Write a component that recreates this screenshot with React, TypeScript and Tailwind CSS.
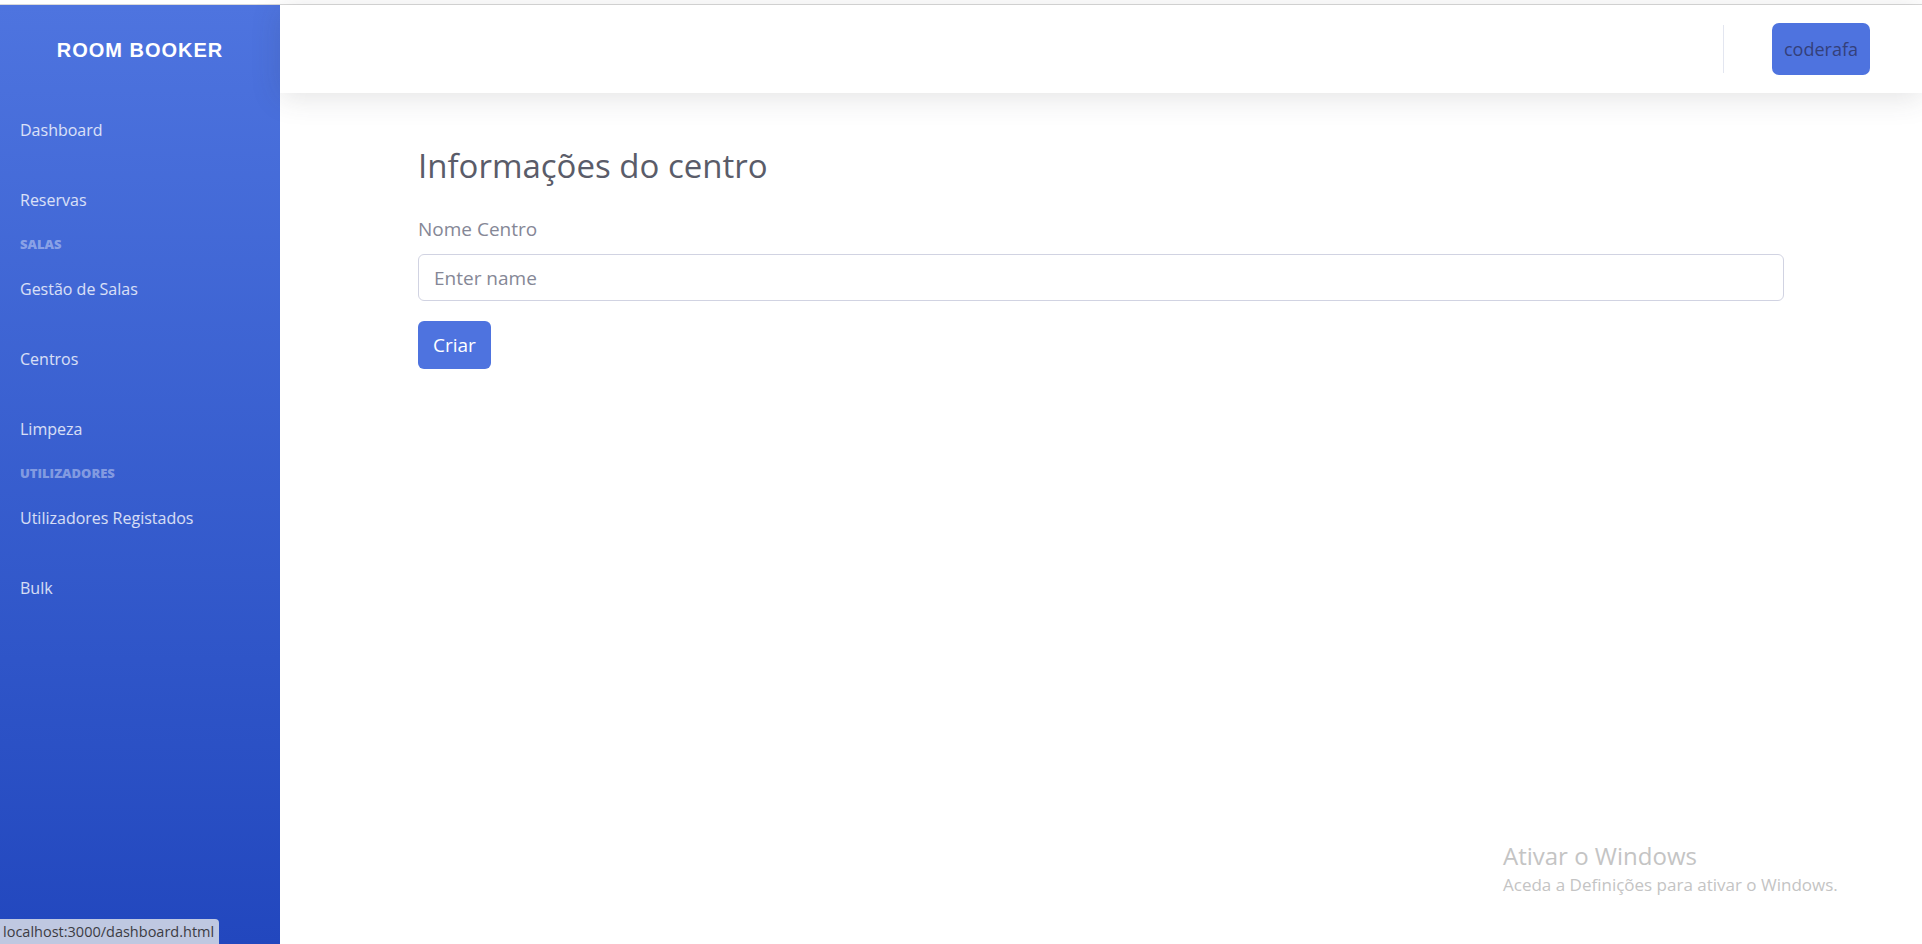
import { useState } from "react";

const navItems = [
  { label: "Dashboard" },
  { label: "Reservas" },
  { heading: "Salas" },
  { label: "Gestão de Salas" },
  { label: "Centros" },
  { label: "Limpeza" },
  { heading: "Utilizadores" },
  { label: "Utilizadores Registados" },
  { label: "Bulk" },
];

function Sidebar() {
  return (
    <div className="flex w-[280px] shrink-0 flex-col bg-gradient-to-b from-[#4e74df] to-[#2247be]">
      <div className="flex h-[90px] items-center justify-center">
        <span className="font-['Liberation_Sans'] text-[20px] font-extrabold uppercase tracking-[0.05em] text-white">
          Room Booker
        </span>
      </div>
      {navItems.map((item, i) =>
        item.heading ? (
          <div
            key={i}
            className="flex h-[19px] items-center px-5 text-[13px] font-extrabold uppercase text-white/40"
          >
            {item.heading}
          </div>
        ) : (
          <a
            key={i}
            href="#"
            className="flex h-[70px] items-center px-5 text-[16px] text-white/80 hover:text-white"
          >
            {item.label}
          </a>
        )
      )}
    </div>
  );
}

function TopBar() {
  return (
    <div className="relative z-10 flex h-[88px] shrink-0 items-center justify-end bg-white pr-[52px] shadow-[0_4px_28px_0_rgba(58,59,69,0.15)]">
      <div className="mr-[48px] h-[48px] w-px bg-[#e3e6f0]" />
      <button className="h-[52px] rounded-[7px] bg-[#4e73df] px-[12px] text-[18px] text-[#34407a]">
        coderafa
      </button>
    </div>
  );
}

export default function App() {
  const [name, setName] = useState("");

  return (
    <div className="relative flex h-screen w-full flex-col overflow-hidden bg-white font-['Open_Sans',sans-serif]">
      <div className="h-[5px] shrink-0 border-b border-[#d9d9d9] bg-white" />
      <div className="flex min-h-0 flex-1">
        <Sidebar />
        <div className="flex min-w-0 flex-1 flex-col">
          <TopBar />
          <div className="px-[138px] pt-[48px]">
            <h3 className="text-[33px] text-[#5a5c69]">Informações do centro</h3>
            <label className="mt-[24px] block text-[19px] text-[#858796]">Nome Centro</label>
            <input
              value={name}
              onChange={(e) => setName(e.target.value)}
              placeholder="Enter name"
              className="mt-[11px] h-[47px] w-full rounded-[6px] border border-[#d1d3e2] px-[15px] text-[19px] text-[#6e707e] outline-none placeholder:text-[#858796]"
            />
            <button className="mt-[20px] h-[48px] rounded-[6px] bg-[#4e73df] px-[15px] text-[19px] text-white">
              Criar
            </button>
          </div>
        </div>
      </div>

      {/* windows watermark */}
      <div className="pointer-events-none absolute left-[1503px] top-[840px] font-['Open_Sans',sans-serif] text-[#c4c4c4]">
        <div className="text-[24px] leading-[32px]">Ativar o Windows</div>
        <div className="text-[17px] leading-[26px]">Aceda a Definições para ativar o Windows.</div>
      </div>

      {/* browser status bar */}
      <div className="absolute bottom-0 left-0 flex h-[25px] w-[219px] items-center rounded-tr-[4px] bg-[#bfc8e1] pl-[3px] text-[14.5px] text-[#3c3c44]">
        localhost:3000/dashboard.html
      </div>
    </div>
  );
}
